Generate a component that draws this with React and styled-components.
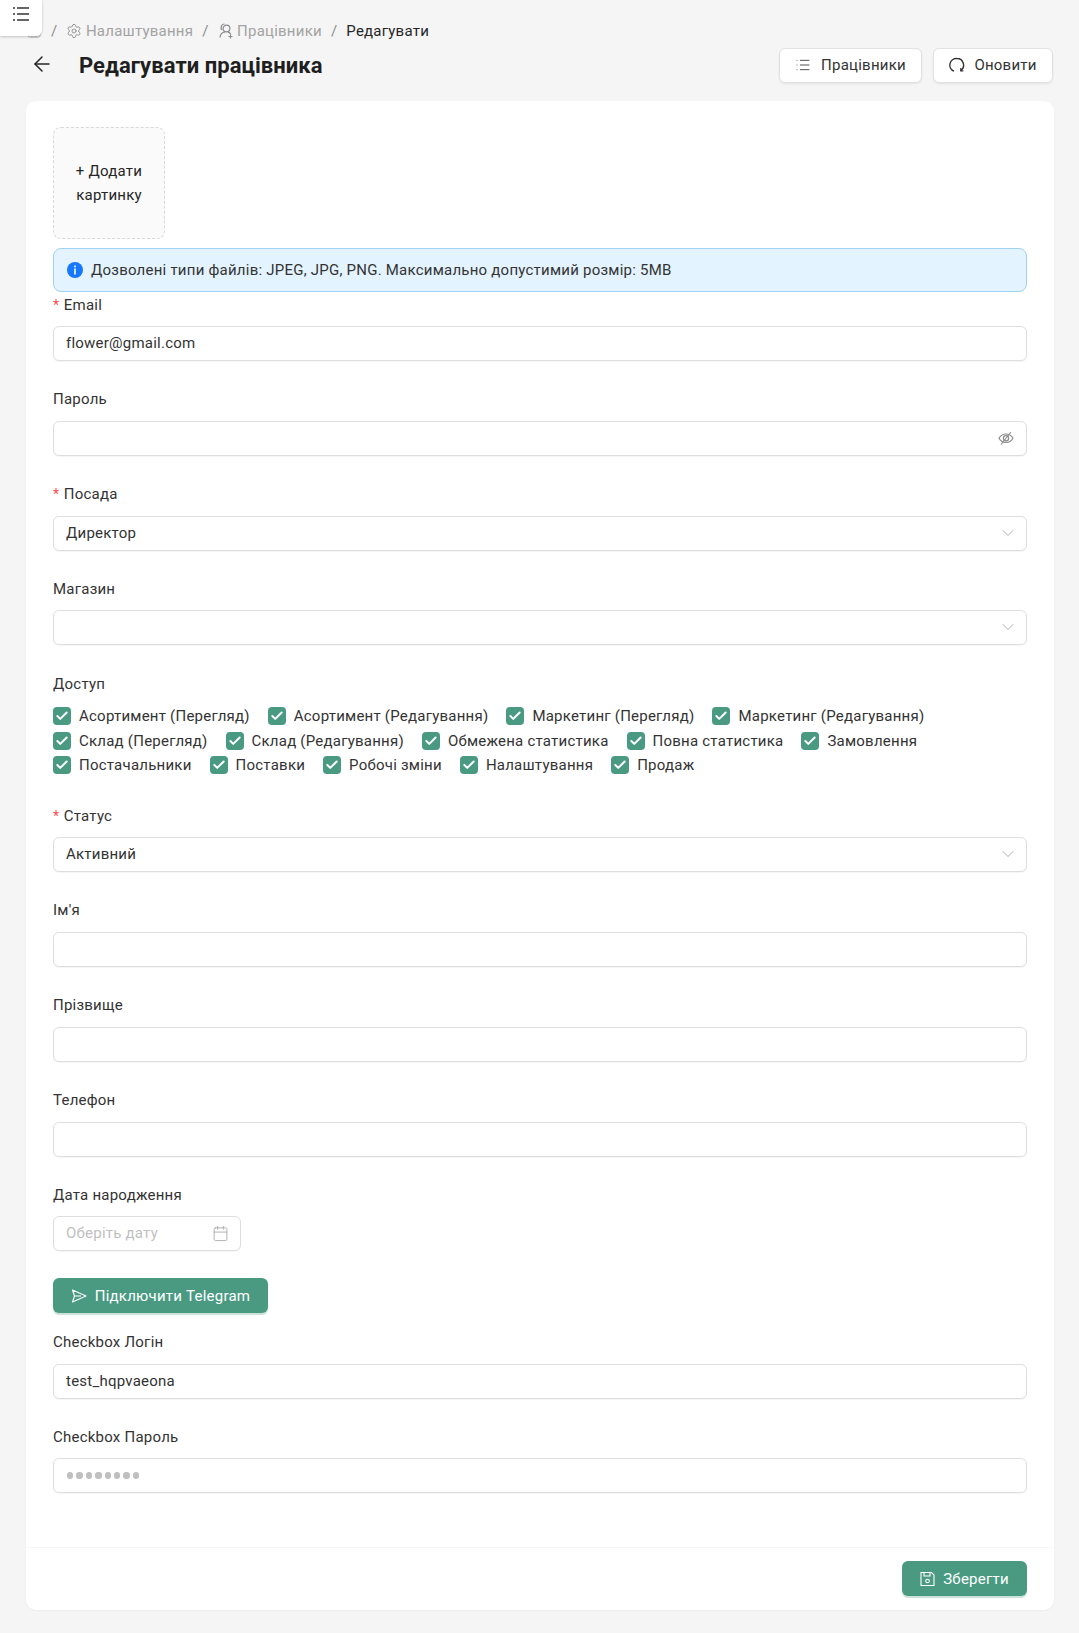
import React from "react";
import styled, { createGlobalStyle } from "styled-components";
import { List, Settings, ArrowLeft, Calendar, ChevronDown, Check, Home } from "lucide-react";

const GlobalStyle = createGlobalStyle`
  html, body { margin: 0; padding: 0; background: #f5f5f5; }
  body { font-family: Roboto, "Noto Sans", sans-serif; color: #262626; }
  * { box-sizing: border-box; }
`;

const Page = styled.div`
  position: relative;
  width: 1079px;
  height: 1633px;
  padding: 19px 25px 0 26px;
  overflow: hidden;
`;

const MenuButton = styled.div`
  position: absolute;
  left: 0;
  top: 0;
  width: 42px;
  height: 36px;
  background: #fff;
  border-radius: 0 0 6px 0;
  box-shadow: 0 1px 3px rgba(0, 0, 0, 0.2);
  display: flex;
  justify-content: center;
  padding-top: 7px;
  color: #666;
`;

const Breadcrumb = styled.nav`
  display: flex;
  align-items: center;
  height: 24px;
  font-size: 15px;
  letter-spacing: 0.23px;
  color: #a3a3a3;
`;

const Crumb = styled.span`
  display: flex;
  align-items: center;
  gap: 3.5px;
  color: ${({ $current }) => ($current ? "#262626" : "#a3a3a3")};
`;

const Slash = styled.span`
  margin: 0 9px;
  color: #8c8c8c;
`;

const Header = styled.header`
  display: flex;
  align-items: center;
  height: 36px;
  margin-top: 4px;
  padding-left: 4px;
`;

const BackIcon = styled.span`
  display: flex;
  width: 49px;
  margin-bottom: 3px;
  color: #262626;
`;

const Title = styled.h1`
  margin: 0;
  flex: 1;
  font-size: 22px;
  font-weight: 700;
  letter-spacing: 0.06px;
  color: #1f1f1f;
`;

const Actions = styled.div`
  display: flex;
  gap: 11px;
  margin-right: 1px;
`;

const GhostButton = styled.button`
  display: flex;
  align-items: center;
  justify-content: center;
  gap: ${({ $gap }) => $gap}px;
  width: ${({ $w }) => $w}px;
  height: 35px;
  background: #fff;
  border: 1px solid #e2e2e2;
  border-radius: 6px;
  box-shadow: 0 1px 2px rgba(0, 0, 0, 0.08);
  font: 400 15px Roboto, sans-serif;
  letter-spacing: 0.23px;
  color: #333;
`;

const Card = styled.main`
  margin-top: 18px;
  height: 1509px;
  background: #fff;
  border-radius: 10px;
  box-shadow: 0 1px 2px rgba(0, 0, 0, 0.04);
  padding: 26px 27px 0;
  display: flex;
  flex-direction: column;
`;

const Upload = styled.div`
  width: 112px;
  height: 112px;
  background: #fafafa;
  border: 1px dashed #d9d9d9;
  border-radius: 8px;
  display: flex;
  align-items: center;
  justify-content: center;
  text-align: center;
  font-size: 15px;
  line-height: 24px;
  letter-spacing: 0.23px;
  color: #262626;
`;

const Alert = styled.div`
  display: flex;
  align-items: center;
  gap: 8px;
  margin-top: 9px;
  height: 44px;
  padding-left: 13px;
  background: #e3f3ff;
  border: 1px solid #a0d2f5;
  border-radius: 8px;
  font-size: 15px;
  letter-spacing: 0.23px;
  color: #333;
`;

const Field = styled.div`
  margin-bottom: ${({ $mb }) => ($mb === undefined ? 25.8 : $mb)}px;
`;

const Label = styled.label`
  display: flex;
  align-items: center;
  height: 25px;
  margin-bottom: 9px;
  font-size: 15px;
  letter-spacing: 0.23px;
  color: #333;
`;

const Required = styled.span`
  color: #ff4d4f;
  margin-right: 4.5px;
  font-size: 14px;
`;

const Input = styled.div`
  display: flex;
  align-items: center;
  justify-content: space-between;
  width: ${({ $w }) => ($w ? `${$w}px` : "100%")};
  height: 35px;
  padding: 0 12px 1px;
  background: #fff;
  border: 1px solid #dedede;
  border-radius: 6px;
  box-shadow: 0 1px 1px rgba(0, 0, 0, 0.04);
  font-size: 15px;
  letter-spacing: 0.23px;
  color: #333;
`;

const Placeholder = styled.span`
  color: #bfbfbf;
`;

const Dots = styled.span`
  display: flex;
  gap: 3px;
  margin-left: 1px;
`;

const Dot = styled.i`
  width: 6.4px;
  height: 6.4px;
  border-radius: 50%;
  background: #bfbfbf;
`;

const IconSlot = styled.span`
  display: flex;
  margin-right: ${({ $shift }) => $shift || 0}px;
  color: #a6a6a6;
`;

const CheckGrid = styled.div`
  display: flex;
  flex-direction: column;
  gap: 6.5px;
  margin-top: 11px;
`;

const CheckRow = styled.div`
  display: flex;
  gap: 18px;
`;

const CheckItem = styled.span`
  display: flex;
  align-items: center;
  gap: 8px;
  height: 18px;
  font-size: 15px;
  letter-spacing: 0.23px;
  color: #333;
`;

const CheckBox = styled.span`
  display: flex;
  align-items: center;
  justify-content: center;
  width: 18px;
  height: 18px;
  background: #4a9a82;
  border-radius: 4px;
  color: #fff;
`;

const PrimaryButton = styled.button`
  display: flex;
  align-items: center;
  justify-content: center;
  gap: 8px;
  width: ${({ $w }) => $w}px;
  height: 35px;
  background: #4a9a82;
  border: none;
  border-radius: 6px;
  box-shadow: 0 2px 1px rgba(74, 154, 130, 0.3);
  font: 400 15px Roboto, sans-serif;
  letter-spacing: 0.23px;
  color: #fff;
`;

const TelegramWrap = styled.div`
  margin-bottom: 16.5px;
`;

const Footer = styled.footer`
  margin: auto -27px 0;
  height: 63px;
  border-top: 1px solid #f7f7f7;
  display: flex;
  justify-content: flex-end;
  padding: 13px 27px 0;
`;

const MenuIcon = () => (
  <svg width="16" height="14" viewBox="0 0 16 14" fill="none" stroke="currentColor" strokeWidth="2">
    <path d="M0 1h2M4 1h12M0 7h2M4 7h12M0 13h2M4 13h12" />
  </svg>
);

const InfoIcon = () => (
  <svg width="16" height="16" viewBox="0 0 16 16">
    <circle cx="8" cy="8" r="8" fill="#1677ff" />
    <rect x="7.2" y="3.5" width="1.6" height="1.8" fill="#fff" />
    <rect x="7.2" y="6.5" width="1.6" height="6" fill="#fff" />
  </svg>
);

const UsersIcon = () => (
  <svg width="16" height="16" viewBox="0 0 16 16" fill="none" stroke="#8c8c8c" strokeWidth="1.2">
    <circle cx="8.5" cy="5.5" r="3.4" />
    <path d="M2 14.500c.3-3.200 2.400-5.300 5-5.500" />
    <path d="M6.500 1C3.700 1 2.200 3.800 3.600 7" />
    <path d="M10 9.200c1.200.3 2.200 1 2.800 2" />
    <path d="M12.500 11.500v4M10.500 13.500h4" />
  </svg>
);

const ReloadIcon = () => (
  <svg width="16" height="16" viewBox="0 0 16 16" fill="none" stroke="#333" strokeWidth="1.4">
    <path d="M5 14.200A6.600 6.600 0 0 1 8 1.500a6.600 6.600 0 0 1 3.600 12.100" />
    <path d="M11.800 11v2.900h2.600" strokeWidth="1.2" />
  </svg>
);

const EyeOff = () => (
  <svg width="16" height="16" viewBox="0 0 16 16" fill="none" stroke="#8c8c8c" strokeWidth="1.2">
    <path d="M1 8.200C2.600 5.400 5 4 8 4s5.400 1.400 7 4.200c-1.600 2.800-4 4.200-7 4.200S2.600 11 1 8.200z" />
    <circle cx="8" cy="8.200" r="2.600" />
    <path d="M13 2 3 14.500" />
  </svg>
);

const SendIcon = () => (
  <svg width="16" height="16" viewBox="0 0 16 16" fill="none" stroke="#fff" strokeWidth="1.1" strokeLinejoin="round">
    <path d="M1.500 2 15 8 1.500 14 3.500 8z" />
    <path d="M3.500 8H10" />
  </svg>
);

const SaveIcon = () => (
  <svg width="15" height="16" viewBox="0 0 15 16" fill="none" stroke="#fff" strokeWidth="1.1">
    <path d="M1 1.500h10.500l2.500 2.500v10.500H1z" />
    <path d="M4 1.500v3.500h6V1.500" />
    <circle cx="7.500" cy="10" r="1.800" />
  </svg>
);

const permissions = [
  ["Асортимент (Перегляд)", "Асортимент (Редагування)", "Маркетинг (Перегляд)", "Маркетинг (Редагування)"],
  ["Склад (Перегляд)", "Склад (Редагування)", "Обмежена статистика", "Повна статистика", "Замовлення"],
  ["Постачальники", "Поставки", "Робочі зміни", "Налаштування", "Продаж"],
];

const TextField = ({ label, required, children, mb }) => (
  <Field $mb={mb}>
    <Label>
      {required && <Required>*</Required>}
      {label}
    </Label>
    {children}
  </Field>
);

const SelectArrow = () => (
  <IconSlot $shift={-4}>
    <ChevronDown size={20} strokeWidth={1.1} />
  </IconSlot>
);

export default function App() {
  return (
    <Page>
      <GlobalStyle />
      <MenuButton>
        <MenuIcon />
      </MenuButton>
      <Breadcrumb>
        <Crumb>
          <Home size={16} strokeWidth={1.2} />
        </Crumb>
        <Slash>/</Slash>
        <Crumb>
          <Settings size={16} strokeWidth={1.4} color="#8c8c8c" />
          Налаштування
        </Crumb>
        <Slash>/</Slash>
        <Crumb>
          <UsersIcon />
          Працівники
        </Crumb>
        <Slash>/</Slash>
        <Crumb $current>Редагувати</Crumb>
      </Breadcrumb>
      <Header>
        <BackIcon>
          <ArrowLeft size={24} strokeWidth={1.5} />
        </BackIcon>
        <Title>Редагувати працівника</Title>
        <Actions>
          <GhostButton $w={143} $gap={10}>
            <List size={16} strokeWidth={1.3} />
            Працівники
          </GhostButton>
          <GhostButton $w={120} $gap={9}>
            <ReloadIcon />
            Оновити
          </GhostButton>
        </Actions>
      </Header>
      <Card>
        <Upload>
          + Додати
          <br />
          картинку
        </Upload>
        <Alert>
          <InfoIcon />
          Дозволені типи файлів: JPEG, JPG, PNG. Максимально допустимий розмір: 5MB
        </Alert>
        <TextField label="Email" required>
          <Input>flower@gmail.com</Input>
        </TextField>
        <TextField label="Пароль">
          <Input>
            <span />
            <EyeOff />
          </Input>
        </TextField>
        <TextField label="Посада" required>
          <Input>
            Директор
            <SelectArrow />
          </Input>
        </TextField>
        <TextField label="Магазин">
          <Input>
            <span />
            <SelectArrow />
          </Input>
        </TextField>
        <TextField label="Доступ" mb={29}>
          <CheckGrid>
            {permissions.map((row) => (
              <CheckRow key={row[0]}>
                {row.map((item) => (
                  <CheckItem key={item}>
                    <CheckBox>
                      <Check size={14} strokeWidth={3.4} />
                    </CheckBox>
                    {item}
                  </CheckItem>
                ))}
              </CheckRow>
            ))}
          </CheckGrid>
        </TextField>
        <TextField label="Статус" required>
          <Input>
            Активний
            <SelectArrow />
          </Input>
        </TextField>
        <TextField label="Ім'я">
          <Input />
        </TextField>
        <TextField label="Прізвище">
          <Input />
        </TextField>
        <TextField label="Телефон">
          <Input />
        </TextField>
        <TextField label="Дата народження" mb={26.8}>
          <Input $w={188}>
            <Placeholder>Оберіть дату</Placeholder>
            <IconSlot $shift={-1}>
              <Calendar size={17} strokeWidth={1.2} />
            </IconSlot>
          </Input>
        </TextField>
        <TelegramWrap>
          <PrimaryButton $w={215}>
            <SendIcon />
            Підключити Telegram
          </PrimaryButton>
        </TelegramWrap>
        <TextField label="Checkbox Логін">
          <Input>test_hqpvaeona</Input>
        </TextField>
        <TextField label="Checkbox Пароль" mb={0}>
          <Input>
            <Dots>
              {Array.from({ length: 8 }, (_, i) => (
                <Dot key={i} />
              ))}
            </Dots>
          </Input>
        </TextField>
        <Footer>
          <PrimaryButton $w={125}>
            <SaveIcon />
            Зберегти
          </PrimaryButton>
        </Footer>
      </Card>
    </Page>
  );
}
